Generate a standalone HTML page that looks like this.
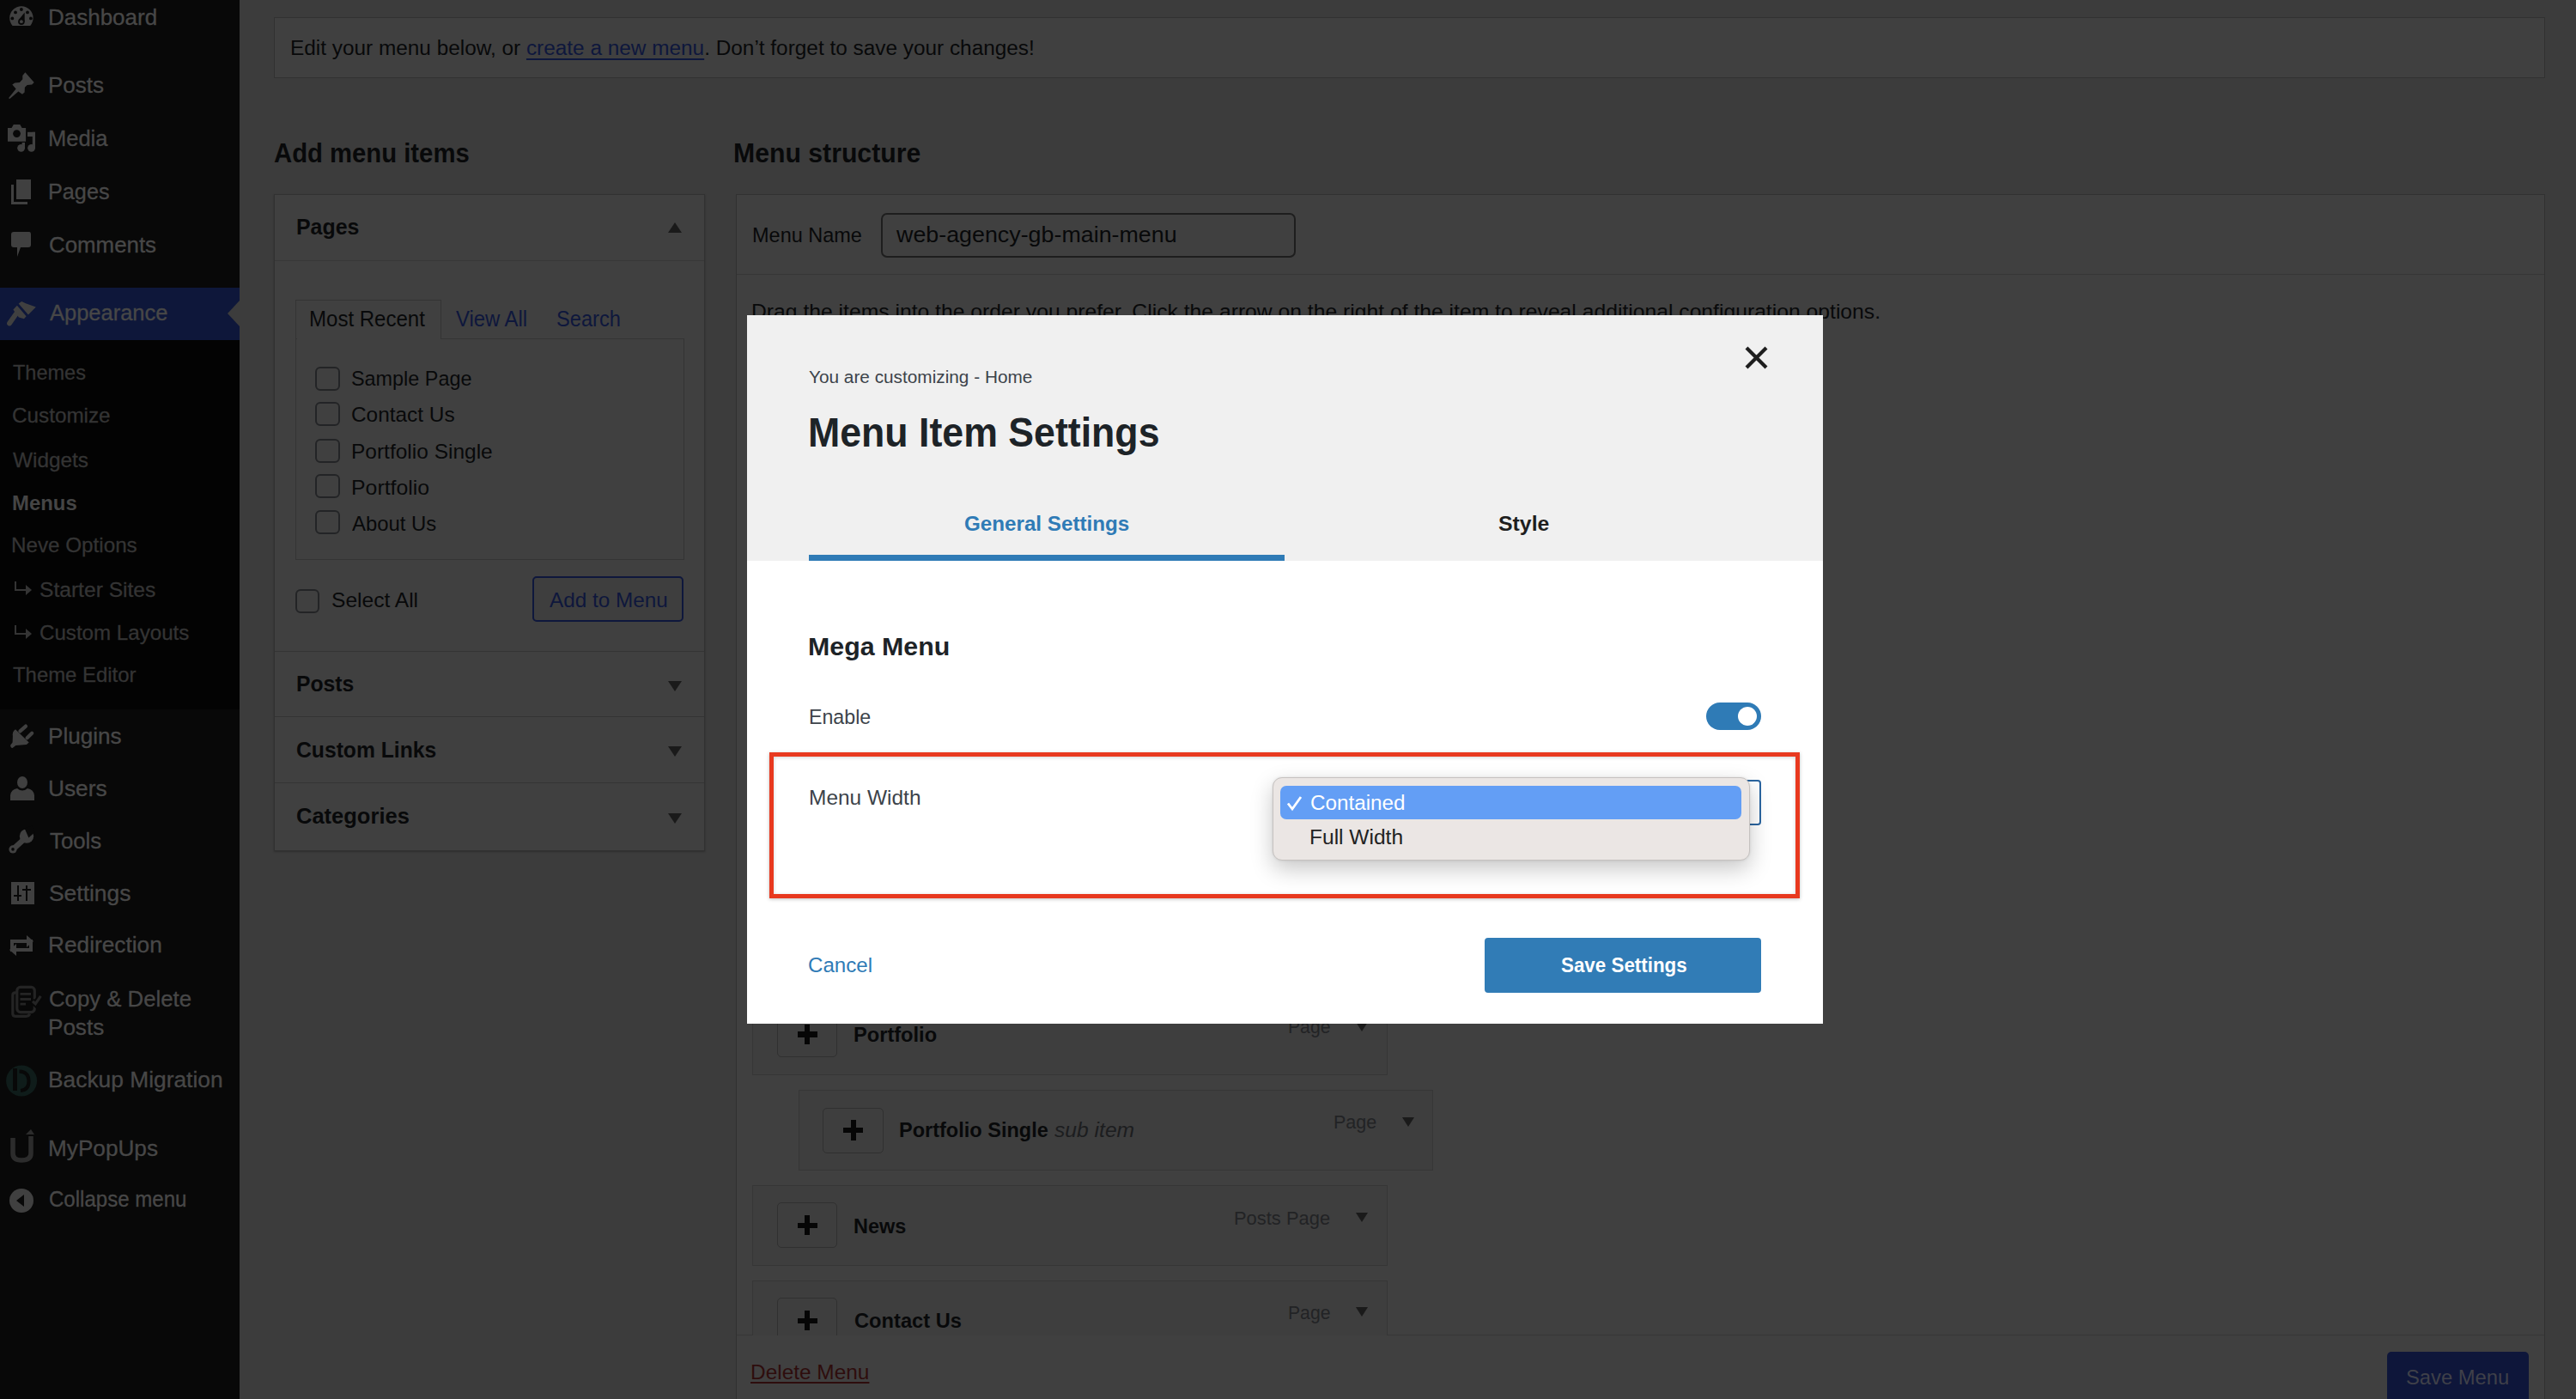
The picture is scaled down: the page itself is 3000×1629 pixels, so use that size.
<!DOCTYPE html>
<html><head><meta charset="utf-8"><title>Menu Item Settings</title>
<style>
html,body{margin:0;padding:0;}
body{width:3000px;height:1629px;overflow:hidden;position:relative;background:#3c3c3c;font-family:"Liberation Sans", sans-serif;}
.r{position:absolute;}
.t{position:absolute;white-space:nowrap;line-height:1.117;transform-origin:0 0;}
svg.r{overflow:visible;}
</style></head><body>
<div class="r" style="left:0.00px;top:0.00px;width:279.00px;height:1629.00px;background:#080808;"></div>
<div class="r" style="left:0.00px;top:396.00px;width:279.00px;height:430.00px;background:#030303;"></div>
<div class="r" style="left:0.00px;top:335.00px;width:279.00px;height:61.00px;background:#0e173a;"></div>
<svg class="r" style="left:264px;top:350px;" width="16" height="30"><polygon points="15,0 1,15 15,30" fill="#3c3c3c"/></svg>
<span class="t" style="left:56.29px;top:5.68px;font-size:25.87px;color:#474747;transform:scaleX(1.0047);-webkit-text-stroke-width:0.35px;">Dashboard</span>
<span class="t" style="left:56.29px;top:85.28px;font-size:25.87px;color:#474747;transform:scaleX(1.0058);-webkit-text-stroke-width:0.35px;">Posts</span>
<span class="t" style="left:56.33px;top:146.78px;font-size:25.87px;color:#474747;transform:scaleX(0.9862);-webkit-text-stroke-width:0.35px;">Media</span>
<span class="t" style="left:56.35px;top:209.28px;font-size:25.87px;color:#474747;transform:scaleX(0.9759);-webkit-text-stroke-width:0.35px;">Pages</span>
<span class="t" style="left:57.30px;top:270.58px;font-size:25.87px;color:#474747;transform:scaleX(1.0001);-webkit-text-stroke-width:0.35px;">Comments</span>
<span class="t" style="left:58.30px;top:350.18px;font-size:25.87px;color:#474747;transform:scaleX(0.9850);-webkit-text-stroke-width:0.35px;">Appearance</span>
<span class="t" style="left:56.28px;top:842.98px;font-size:25.87px;color:#474747;transform:scaleX(1.0087);-webkit-text-stroke-width:0.35px;">Plugins</span>
<span class="t" style="left:56.27px;top:904.18px;font-size:25.87px;color:#474747;transform:scaleX(1.0155);-webkit-text-stroke-width:0.35px;">Users</span>
<span class="t" style="left:58.30px;top:964.78px;font-size:25.87px;color:#474747;transform:scaleX(0.9960);-webkit-text-stroke-width:0.35px;">Tools</span>
<span class="t" style="left:57.28px;top:1025.68px;font-size:25.87px;color:#474747;transform:scaleX(1.0218);-webkit-text-stroke-width:0.35px;">Settings</span>
<span class="t" style="left:56.27px;top:1086.38px;font-size:25.87px;color:#474747;transform:scaleX(1.0148);-webkit-text-stroke-width:0.35px;">Redirection</span>
<span class="t" style="left:57.30px;top:1149.48px;font-size:25.87px;color:#474747;transform:scaleX(0.9960);-webkit-text-stroke-width:0.35px;">Copy &amp; Delete</span>
<span class="t" style="left:56.29px;top:1182.08px;font-size:25.87px;color:#474747;transform:scaleX(1.0074);-webkit-text-stroke-width:0.35px;">Posts</span>
<span class="t" style="left:56.26px;top:1242.68px;font-size:25.87px;color:#474747;transform:scaleX(1.0188);-webkit-text-stroke-width:0.35px;">Backup Migration</span>
<span class="t" style="left:56.28px;top:1322.68px;font-size:25.87px;color:#474747;transform:scaleX(1.0118);-webkit-text-stroke-width:0.35px;">MyPopUps</span>
<span class="t" style="left:57.37px;top:1382.08px;font-size:25.87px;color:#474747;transform:scaleX(0.9300);-webkit-text-stroke-width:0.35px;">Collapse menu</span>
<span class="t" style="left:15.30px;top:419.83px;font-size:24.71px;color:#343434;transform:scaleX(0.9518);-webkit-text-stroke-width:0.3px;">Themes</span>
<span class="t" style="left:14.32px;top:470.13px;font-size:24.71px;color:#343434;transform:scaleX(0.9822);-webkit-text-stroke-width:0.3px;">Customize</span>
<span class="t" style="left:15.30px;top:521.53px;font-size:24.71px;color:#343434;transform:scaleX(0.9867);-webkit-text-stroke-width:0.3px;">Widgets</span>
<span class="t" style="left:14.33px;top:571.93px;font-size:24.71px;color:#454545;transform:scaleX(0.9674);font-weight:700;">Menus</span>
<span class="t" style="left:13.34px;top:621.43px;font-size:24.71px;color:#343434;transform:scaleX(0.9802);-webkit-text-stroke-width:0.3px;">Neve Options</span>
<span class="t" style="left:46.20px;top:672.53px;font-size:24.71px;color:#343434;transform:scaleX(0.9958);-webkit-text-stroke-width:0.3px;">Starter Sites</span>
<span class="t" style="left:46.22px;top:722.93px;font-size:24.71px;color:#343434;transform:scaleX(0.9766);-webkit-text-stroke-width:0.3px;">Custom Layouts</span>
<span class="t" style="left:15.30px;top:772.43px;font-size:24.71px;color:#343434;transform:scaleX(0.9679);-webkit-text-stroke-width:0.3px;">Theme Editor</span>
<svg class="r" style="left:16px;top:677px;" width="22" height="16"><path d="M2,0 V10 H15" stroke="#343434" stroke-width="2" fill="none"/><polygon points="14,4 21,10 14,16" fill="#343434"/></svg>
<svg class="r" style="left:16px;top:727.5px;" width="22" height="16"><path d="M2,0 V10 H15" stroke="#343434" stroke-width="2" fill="none"/><polygon points="14,4 21,10 14,16" fill="#343434"/></svg>
<svg class="r" style="left:0;top:0;" width="279" height="1629"><path d="M14.6,29.9 A13.7,13.7 0 1 1 35.2,29.9 Z" fill="#404040"/><circle cx="24.9" cy="11" r="1.9" fill="#080808"/><circle cx="18" cy="14.4" r="1.9" fill="#080808"/><circle cx="32" cy="14.4" r="1.9" fill="#080808"/><circle cx="14.3" cy="21.4" r="1.9" fill="#080808"/><circle cx="35.9" cy="21.4" r="1.9" fill="#080808"/><polygon points="21.6,23.2 28.7,14.4 28.7,25.2" fill="#080808"/><circle cx="24.9" cy="25.2" r="3.8" fill="#080808"/><circle cx="24.9" cy="25.2" r="1.9" fill="#404040"/><polygon points="29.4,84.3 39.7,96 37.2,98.6 31.7,98.9 28.9,101.7 28.6,107.4 26,109.7 21.4,106.6 11.4,114.9 10,114.3 18.6,103.4 14.3,98.6 17.2,96.6 22.9,96 26.3,92.3 26.3,88" fill="#404040"/><path d="M9,149 H13.5 L15.8,145 H23.3 L25.6,149 H30.1 V164.8 H9 Z" fill="#404040"/><circle cx="19.5" cy="155.6" r="4.4" fill="#080808"/><rect x="37.8" y="153.8" width="3.2" height="19" fill="#404040"/><rect x="32" y="153.8" width="9" height="5.2" fill="#404040"/><circle cx="36.6" cy="172.3" r="4.4" fill="#404040"/><rect x="25.6" y="166" width="3.4" height="7" fill="#404040"/><circle cx="24.6" cy="172.3" r="4.4" fill="#404040"/><polygon points="21.6,353.6 25.2,351.1 30,353.3 41.8,357.6 32.9,366.6" fill="#404040"/><polygon points="15.4,360.4 19.9,355.8 30.6,368.3 28,371.3 21.9,369.6 18.6,365.2" fill="#404040"/><path d="M18.6,365.6 L11,376.5" stroke="#404040" stroke-width="5.8" stroke-linecap="round"/><path d="M18,849.2 Q14,852 14.9,857 L14.6,864.6 L12.2,867.6 Q12,871 14.6,871 L18.3,867.9 L30.9,866.9 L33.7,864.6 Z" fill="#404040"/><path d="M23.4,851.4 L30,845.6 M31.6,859.2 L37.2,853.8" stroke="#404040" stroke-width="4.2" stroke-linecap="round"/><path d="M15.2,988.9 L28.6,976.6" stroke="#404040" stroke-width="6.4" stroke-linecap="round"/><circle cx="15" cy="988.9" r="4.6" fill="#404040"/><circle cx="15" cy="988.9" r="1.8" fill="#080808"/><circle cx="31" cy="973.6" r="8.2" fill="#404040"/><polygon points="28.6,964.4 33.4,975.4 41,968.6 37.5,961.5" fill="#080808"/><path d="M19.8,1155.8 H17.8 Q14.8,1155.8 14.8,1158.8 V1180.3 Q14.8,1183.3 17.8,1183.3 H30.6 Q33.6,1183.3 34.6,1180.5" stroke="#242424" stroke-width="3.2" fill="none"/><rect x="19.8" y="1149.4" width="20.5" height="29.2" rx="4" stroke="#242424" stroke-width="3.2" fill="#080808"/><path d="M23.5,1157.4 H36 M23.5,1163.5 H36 M23.5,1169.2 H30" stroke="#242424" stroke-width="2.8"/><path d="M37.5,1165.5 L41.3,1168.9 L47.4,1159.8" stroke="#080808" stroke-width="7" fill="none"/><path d="M38,1165.8 L41.3,1168.9 L47.4,1159.8" stroke="#242424" stroke-width="3.2" fill="none"/><circle cx="25.1" cy="1258.5" r="18" fill="#0f1c1a"/><rect x="15" y="1244" width="5" height="26" fill="#080808"/><path d="M22.5,1247.5 Q33,1248 33.5,1258 Q34,1269 24,1270" stroke="#080808" stroke-width="4" fill="none"/></svg>
<svg class="r" style="left:13px;top:209px;" width="24" height="29" viewBox="0 0 24 29"><rect x="6" y="0" width="17" height="23" fill="#404040"/><path d="M1.5,6 V27.5 H19" stroke="#404040" stroke-width="3" fill="none"/></svg>
<svg class="r" style="left:13px;top:270px;" width="24" height="30" viewBox="0 0 24 30"><path d="M3,0 H21 Q23,0 23,3 V15 Q23,18 20,18 H11 L7,29 L7,18 H3 Q0,18 0,15 V3 Q0,0 3,0 Z" fill="#404040"/></svg>
<svg class="r" style="left:12px;top:904px;" width="28" height="29" viewBox="0 0 28 29"><ellipse cx="14" cy="7" rx="6" ry="7" fill="#404040"/><path d="M0,28 V22 Q1,15 8,14 Q14,19 20,14 Q27,15 28,22 V28 Z" fill="#404040"/></svg>
<svg class="r" style="left:13px;top:1027px;" width="27" height="27" viewBox="0 0 27 27"><rect x="0" y="0" width="27" height="26" fill="#404040"/><path d="M8,4 V22 M18,4 V22 M3,16 H12 M13,9 H23" stroke="#080808" stroke-width="2"/></svg>
<svg class="r" style="left:11px;top:1088px;" width="28" height="26" viewBox="0 0 28 26"><path d="M3,20 V8 H22" stroke="#404040" stroke-width="4" fill="none"/><polygon points="20,1 28,8 20,15" fill="#404040"/><path d="M25,6 V18 H6" stroke="#404040" stroke-width="4" fill="none"/><polygon points="8,11 0,18 8,25" fill="#404040"/></svg>
<svg class="r" style="left:13px;top:1315px;" width="27" height="37" viewBox="0 0 27 37"><path d="M2,10 V28 Q2,36 12,36 Q23,36 23,28 V8" stroke="#2c2c2c" stroke-width="5.5" fill="none"/><polygon points="17,6 23,0 27,6" fill="#2c2c2c"/></svg>
<svg class="r" style="left:11px;top:1384px;" width="28" height="28" viewBox="0 0 28 28"><circle cx="14" cy="14" r="14" fill="#404040"/><polygon points="8,14 17,7 17,21" fill="#080808"/></svg>
<div class="r" style="left:319.00px;top:20.00px;width:2644.50px;height:71.00px;background:#404040;border:1px solid #313131;box-sizing:border-box;"></div>
<span class="t" style="left:337.80px;top:42.09px;font-size:24.42px;color:#08090a;transform:scaleX(0.9983);">Edit your menu below, or <span style="color:#0e173c;text-decoration:underline;text-decoration-thickness:1.6px;text-underline-offset:4px;">create a new menu</span>. Don&#8217;t forget to save your changes!</span>
<span class="t" style="left:319.20px;top:161.45px;font-size:31.54px;color:#08090a;transform:scaleX(0.9283);font-weight:700;">Add menu items</span>
<span class="t" style="left:853.88px;top:161.35px;font-size:31.54px;color:#08090a;transform:scaleX(0.9582);font-weight:700;">Menu structure</span>
<div class="r" style="left:319.00px;top:226.00px;width:502.00px;height:765.00px;background:#404040;border:1px solid #313131;box-sizing:border-box;box-shadow:0 1px 2px rgba(0,0,0,0.25);"></div>
<div class="r" style="left:320.00px;top:303.00px;width:500.00px;height:1.00px;background:#383838;"></div>
<span class="t" style="left:345.36px;top:250.25px;font-size:26.45px;color:#08090a;transform:scaleX(0.9411);font-weight:700;">Pages</span>
<svg class="r" style="left:778px;top:259px;" width="16" height="12" viewBox="0 0 16 12"><polygon points="8,0 16,12 0,12" fill="#1a1a1a"/></svg>
<div class="r" style="left:344.00px;top:349.00px;width:169.50px;height:46.00px;border:1px solid #343434;border-bottom:none;box-sizing:border-box;background:#404040;"></div>
<div class="r" style="left:344.00px;top:394.00px;width:452.50px;height:258.00px;border:1px solid #343434;box-sizing:border-box;background:#404040;"></div>
<div class="r" style="left:345.50px;top:394.00px;width:167.00px;height:1.50px;background:#404040;"></div>
<span class="t" style="left:359.93px;top:356.61px;font-size:25.73px;color:#08090a;transform:scaleX(0.9345);">Most Recent</span>
<span class="t" style="left:530.50px;top:356.61px;font-size:25.73px;color:#0e173c;transform:scaleX(0.9273);">View All</span>
<span class="t" style="left:648.28px;top:356.61px;font-size:25.73px;color:#0e173c;transform:scaleX(0.9181);">Search</span>
<div class="r" style="left:367.30px;top:426.70px;width:28.30px;height:28.00px;border:2px solid #232426;border-radius:6px;box-sizing:border-box;"></div>
<span class="t" style="left:408.84px;top:427.43px;font-size:24.27px;color:#08090a;transform:scaleX(0.9640);">Sample Page</span>
<div class="r" style="left:367.30px;top:468.20px;width:28.30px;height:28.00px;border:2px solid #232426;border-radius:6px;box-sizing:border-box;"></div>
<span class="t" style="left:408.79px;top:469.23px;font-size:24.27px;color:#08090a;transform:scaleX(1.0051);">Contact Us</span>
<div class="r" style="left:367.30px;top:510.70px;width:28.30px;height:28.00px;border:2px solid #232426;border-radius:6px;box-sizing:border-box;"></div>
<span class="t" style="left:408.79px;top:511.73px;font-size:24.27px;color:#08090a;transform:scaleX(1.0092);">Portfolio Single</span>
<div class="r" style="left:367.30px;top:552.00px;width:28.30px;height:28.00px;border:2px solid #232426;border-radius:6px;box-sizing:border-box;"></div>
<span class="t" style="left:408.78px;top:554.13px;font-size:24.27px;color:#08090a;transform:scaleX(1.0237);">Portfolio</span>
<div class="r" style="left:367.30px;top:594.40px;width:28.30px;height:28.00px;border:2px solid #232426;border-radius:6px;box-sizing:border-box;"></div>
<span class="t" style="left:409.80px;top:595.63px;font-size:24.27px;color:#08090a;transform:scaleX(0.9842);">About Us</span>
<div class="r" style="left:344.40px;top:686.00px;width:27.80px;height:27.80px;border:2px solid #232426;border-radius:6px;box-sizing:border-box;"></div>
<span class="t" style="left:385.79px;top:685.33px;font-size:24.27px;color:#08090a;transform:scaleX(1.0126);">Select All</span>
<div class="r" style="left:619.60px;top:671.00px;width:176.70px;height:53.00px;border:2px solid #0e173c;border-radius:5px;box-sizing:border-box;background:#3e3e3e;"></div>
<span class="t" style="left:640.00px;top:685.33px;font-size:24.27px;color:#0e173c;transform:scaleX(1.0007);">Add to Menu</span>
<div class="r" style="left:320.00px;top:758.00px;width:500.00px;height:1.30px;background:#343434;"></div>
<div class="r" style="left:320.00px;top:834.00px;width:500.00px;height:1.30px;background:#343434;"></div>
<div class="r" style="left:320.00px;top:911.00px;width:500.00px;height:1.30px;background:#343434;"></div>
<span class="t" style="left:345.37px;top:782.35px;font-size:26.45px;color:#08090a;transform:scaleX(0.9347);font-weight:700;">Posts</span>
<svg class="r" style="left:778px;top:792.8px;" width="16" height="12" viewBox="0 0 16 12"><polygon points="0,0 16,0 8,12" fill="#1a1a1a"/></svg>
<span class="t" style="left:345.37px;top:858.95px;font-size:26.45px;color:#08090a;transform:scaleX(0.9336);font-weight:700;">Custom Links</span>
<svg class="r" style="left:778px;top:869.4px;" width="16" height="12" viewBox="0 0 16 12"><polygon points="0,0 16,0 8,12" fill="#1a1a1a"/></svg>
<span class="t" style="left:345.34px;top:936.05px;font-size:26.45px;color:#08090a;transform:scaleX(0.9649);font-weight:700;">Categories</span>
<svg class="r" style="left:778px;top:946.5px;" width="16" height="12" viewBox="0 0 16 12"><polygon points="0,0 16,0 8,12" fill="#1a1a1a"/></svg>
<div class="r" style="left:856.50px;top:226.00px;width:2107.00px;height:1474.00px;background:#404040;border:1px solid #313131;box-sizing:border-box;"></div>
<div class="r" style="left:857.50px;top:319.00px;width:2105.50px;height:1.30px;background:#373737;"></div>
<div class="r" style="left:857.50px;top:1554.00px;width:2105.50px;height:1.30px;background:#373737;"></div>
<span class="t" style="left:875.91px;top:261.42px;font-size:23.84px;color:#08090a;transform:scaleX(0.9857);">Menu Name</span>
<div class="r" style="left:1026.30px;top:247.60px;width:482.40px;height:52.40px;border:2px solid #1e1e1e;border-radius:7px;box-sizing:border-box;"></div>
<span class="t" style="left:1043.91px;top:258.85px;font-size:26.45px;color:#08090a;transform:scaleX(1.0149);">web-agency-gb-main-menu</span>
<span class="t" style="left:875.38px;top:349.33px;font-size:24.27px;color:#08090a;transform:scaleX(1.0177);">Drag the items into the order you prefer. Click the arrow on the right of the item to reveal additional configuration options.</span>
<div class="r" style="left:875.50px;top:1150.00px;width:740.50px;height:102.00px;background:#3e3e3e;border:1.5px solid #363636;box-sizing:border-box;"></div>
<div class="r" style="left:904.80px;top:1178.00px;width:70.50px;height:53.00px;border:1.5px solid #303030;border-radius:5px;box-sizing:border-box;"></div>
<div class="r" style="left:928.50px;top:1201.30px;width:23.00px;height:6.40px;background:#060606;"></div>
<div class="r" style="left:937.00px;top:1192.80px;width:6.00px;height:23.40px;background:#060606;"></div>
<span class="t" style="left:993.52px;top:1192.16px;font-size:24.13px;color:#08090a;transform:scaleX(0.9792);font-weight:700;">Portfolio</span>
<span class="t" style="left:1499.64px;top:1183.80px;font-size:22.09px;color:#222325;transform:scaleX(0.9586);">Page</span>
<svg class="r" style="left:1578.8px;top:1189.5px;" width="14" height="11" viewBox="0 0 14 11"><polygon points="0,0 14,0 7,11" fill="#1a1a1a"/></svg>
<div class="r" style="left:929.80px;top:1269.40px;width:739.50px;height:93.60px;background:#3e3e3e;border:1.5px solid #363636;box-sizing:border-box;"></div>
<div class="r" style="left:958.30px;top:1289.60px;width:70.50px;height:53.00px;border:1.5px solid #303030;border-radius:5px;box-sizing:border-box;"></div>
<div class="r" style="left:982.00px;top:1312.90px;width:23.00px;height:6.40px;background:#060606;"></div>
<div class="r" style="left:990.50px;top:1304.40px;width:6.00px;height:23.40px;background:#060606;"></div>
<span class="t" style="left:1047.03px;top:1303.16px;font-size:24.13px;color:#08090a;transform:scaleX(0.9749);font-weight:700;">Portfolio Single</span>
<span class="t" style="left:1228.00px;top:1303.16px;font-size:24.13px;color:#1c1d1f;transform:scaleX(1.0213);font-style:italic;">sub item</span>
<span class="t" style="left:1553.03px;top:1294.80px;font-size:22.09px;color:#222325;transform:scaleX(0.9745);">Page</span>
<svg class="r" style="left:1633px;top:1300.5px;" width="14" height="11" viewBox="0 0 14 11"><polygon points="0,0 14,0 7,11" fill="#1a1a1a"/></svg>
<div class="r" style="left:875.50px;top:1380.20px;width:740.50px;height:94.10px;background:#3e3e3e;border:1.5px solid #363636;box-sizing:border-box;"></div>
<div class="r" style="left:904.80px;top:1400.20px;width:70.50px;height:53.00px;border:1.5px solid #303030;border-radius:5px;box-sizing:border-box;"></div>
<div class="r" style="left:928.50px;top:1423.50px;width:23.00px;height:6.40px;background:#060606;"></div>
<div class="r" style="left:937.00px;top:1415.00px;width:6.00px;height:23.40px;background:#060606;"></div>
<span class="t" style="left:993.53px;top:1414.96px;font-size:24.13px;color:#08090a;transform:scaleX(0.9723);font-weight:700;">News</span>
<span class="t" style="left:1437.01px;top:1406.60px;font-size:22.09px;color:#222325;transform:scaleX(0.9925);">Posts Page</span>
<svg class="r" style="left:1578.8px;top:1412.3px;" width="14" height="11" viewBox="0 0 14 11"><polygon points="0,0 14,0 7,11" fill="#1a1a1a"/></svg>
<div class="r" style="left:875.50px;top:1491.00px;width:740.50px;height:94.00px;background:#3e3e3e;border:1.5px solid #363636;box-sizing:border-box;"></div>
<div class="r" style="left:904.80px;top:1511.20px;width:70.50px;height:53.00px;border:1.5px solid #303030;border-radius:5px;box-sizing:border-box;"></div>
<div class="r" style="left:928.50px;top:1534.50px;width:23.00px;height:6.40px;background:#060606;"></div>
<div class="r" style="left:937.00px;top:1526.00px;width:6.00px;height:23.40px;background:#060606;"></div>
<span class="t" style="left:994.50px;top:1525.06px;font-size:24.13px;color:#08090a;transform:scaleX(0.9809);font-weight:700;">Contact Us</span>
<span class="t" style="left:1499.64px;top:1516.70px;font-size:22.09px;color:#222325;transform:scaleX(0.9586);">Page</span>
<svg class="r" style="left:1578.8px;top:1522.4px;" width="14" height="11" viewBox="0 0 14 11"><polygon points="0,0 14,0 7,11" fill="#1a1a1a"/></svg>
<div class="r" style="left:857.50px;top:1555.30px;width:2105.50px;height:73.70px;background:#404040;"></div>
<span class="t" style="left:874.49px;top:1584.33px;font-size:24.27px;color:#2e0d0d;transform:scaleX(1.0060);text-decoration:underline;text-decoration-thickness:2px;text-underline-offset:3px;">Delete Menu</span>
<div class="r" style="left:2779.70px;top:1573.80px;width:165.30px;height:86.20px;background:#0e163a;border-radius:5px;"></div>
<span class="t" style="left:2801.62px;top:1590.23px;font-size:24.27px;color:#3f4049;transform:scaleX(0.9796);">Save Menu</span>
<div class="r" style="left:870.00px;top:367.00px;width:1253.00px;height:825.00px;background:#ffffff;"></div>
<div class="r" style="left:870.00px;top:367.00px;width:1253.00px;height:286.00px;background:#f0f0f0;"></div>
<svg class="r" style="left:2031px;top:402px;" width="29" height="29" viewBox="0 0 29 29"><path d="M3,3 L26,26 M26,3 L3,26" stroke="#1e1e1e" stroke-width="4.2" stroke-linecap="butt"/></svg>
<span class="t" style="left:942.20px;top:426.82px;font-size:21.08px;color:#3c434a;transform:scaleX(0.9861);">You are customizing - Home</span>
<span class="t" style="left:941.22px;top:477.11px;font-size:48.26px;color:#1d2327;transform:scaleX(0.9257);font-weight:700;">Menu Item Settings</span>
<span class="t" style="left:1123.20px;top:597.16px;font-size:24.13px;color:#2f7bb6;transform:scaleX(1.0026);font-weight:700;">General Settings</span>
<span class="t" style="left:1744.60px;top:597.16px;font-size:24.13px;color:#1e1e1e;transform:scaleX(1.0289);font-weight:700;">Style</span>
<div class="r" style="left:942.00px;top:646.00px;width:554.00px;height:7.00px;background:#2f7bb6;"></div>
<span class="t" style="left:940.80px;top:736.40px;font-size:30.38px;color:#1d2327;transform:scaleX(0.9992);font-weight:700;">Mega Menu</span>
<span class="t" style="left:941.84px;top:820.83px;font-size:24.27px;color:#3c434a;transform:scaleX(0.9560);">Enable</span>
<div class="r" style="left:1987.00px;top:818.00px;width:64.00px;height:32.00px;background:#2f7bb6;border-radius:16px;"></div>
<div class="r" style="left:2024.00px;top:823.00px;width:22.00px;height:22.00px;background:#ffffff;border-radius:50%;"></div>
<div class="r" style="left:895.70px;top:876.20px;width:1200.30px;height:170.30px;border:5.4px solid #e8391f;box-sizing:border-box;box-shadow:0 1px 4px rgba(0,0,0,0.25), inset 0 1px 4px rgba(0,0,0,0.18);"></div>
<span class="t" style="left:941.79px;top:915.43px;font-size:24.27px;color:#3c434a;transform:scaleX(1.0081);">Menu Width</span>
<div class="r" style="left:1600.00px;top:908.30px;width:450.80px;height:52.40px;border:2.4px solid #2a65a0;border-radius:4px;box-sizing:border-box;background:#fff;"></div>
<div class="r" style="left:1481.50px;top:905.40px;width:556.70px;height:97.00px;background:#ebe6e4;border:1px solid #c6c2c0;border-radius:11px;box-sizing:border-box;box-shadow:0 10px 26px rgba(0,0,0,0.22), 0 0 3px rgba(0,0,0,0.10);"></div>
<div class="r" style="left:1491.00px;top:914.90px;width:537.00px;height:38.80px;background:#639ef5;border-radius:7px;"></div>
<svg class="r" style="left:1498px;top:926px;" width="19" height="18" viewBox="0 0 19 18"><path d="M2,9.5 L7,16 L17,2" stroke="#ffffff" stroke-width="2.8" fill="none"/></svg>
<span class="t" style="left:1525.51px;top:920.89px;font-size:24.42px;color:#ffffff;transform:scaleX(0.9927);">Contained</span>
<span class="t" style="left:1524.99px;top:960.89px;font-size:24.42px;color:#222222;transform:scaleX(1.0055);">Full Width</span>
<span class="t" style="left:941.29px;top:1111.22px;font-size:23.84px;color:#2f7bb6;transform:scaleX(1.0114);">Cancel</span>
<div class="r" style="left:1729.00px;top:1092.00px;width:322.00px;height:64.00px;background:#317cb6;border-radius:4px;"></div>
<span class="t" style="left:1817.50px;top:1111.49px;font-size:23.98px;color:#ffffff;transform:scaleX(0.9333);font-weight:700;">Save Settings</span>
</body></html>
